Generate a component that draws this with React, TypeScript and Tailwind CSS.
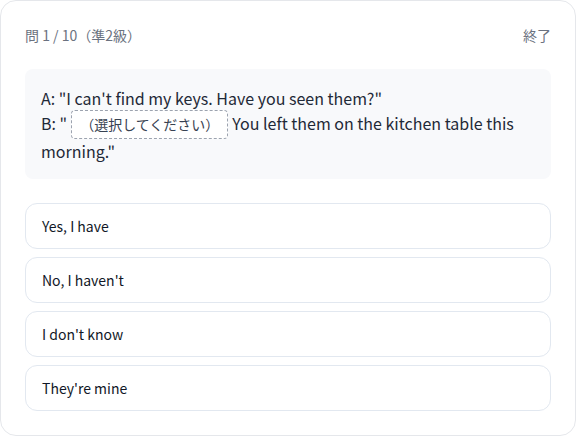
const options = ["Yes, I have", "No, I haven't", "I don't know", "They're mine"];

export default function App() {
  return (
    <div
      className="w-[576px] h-[436px] bg-white"
      style={{ fontFamily: '"Noto Sans CJK JP", "Noto Sans", sans-serif' }}
    >
      <div className="h-full rounded-2xl border border-[#e5e7eb] bg-white p-6">
        <div className="flex items-center justify-between h-5 mb-6 text-sm text-[#6b7280]">
          <span>問 1 / 10（準2級）</span>
          <span>終了</span>
        </div>

        <div className="rounded-lg bg-[#f8f9fb] px-4 pt-[17px] pb-4 text-base leading-6 text-[#1f2937] mb-6">
          <p>A: "I can't find my keys. Have you seen them?"</p>
          <p>
            B: "
            <span className="inline-block mx-1 px-2 h-[29px] leading-[27px] rounded border border-dashed border-[#9ca3af] bg-white text-sm text-[#374151]">
              （選択してください）
            </span>
            You left them on the kitchen table this morning."
          </p>
        </div>

        <div className="flex flex-col gap-2">
          {options.map((o) => (
            <button
              key={o}
              className="h-[46px] w-full rounded-xl border border-[#e2e8f0] bg-white px-4 text-left text-sm text-[#111827]"
            >
              {o}
            </button>
          ))}
        </div>
      </div>
    </div>
  );
}
